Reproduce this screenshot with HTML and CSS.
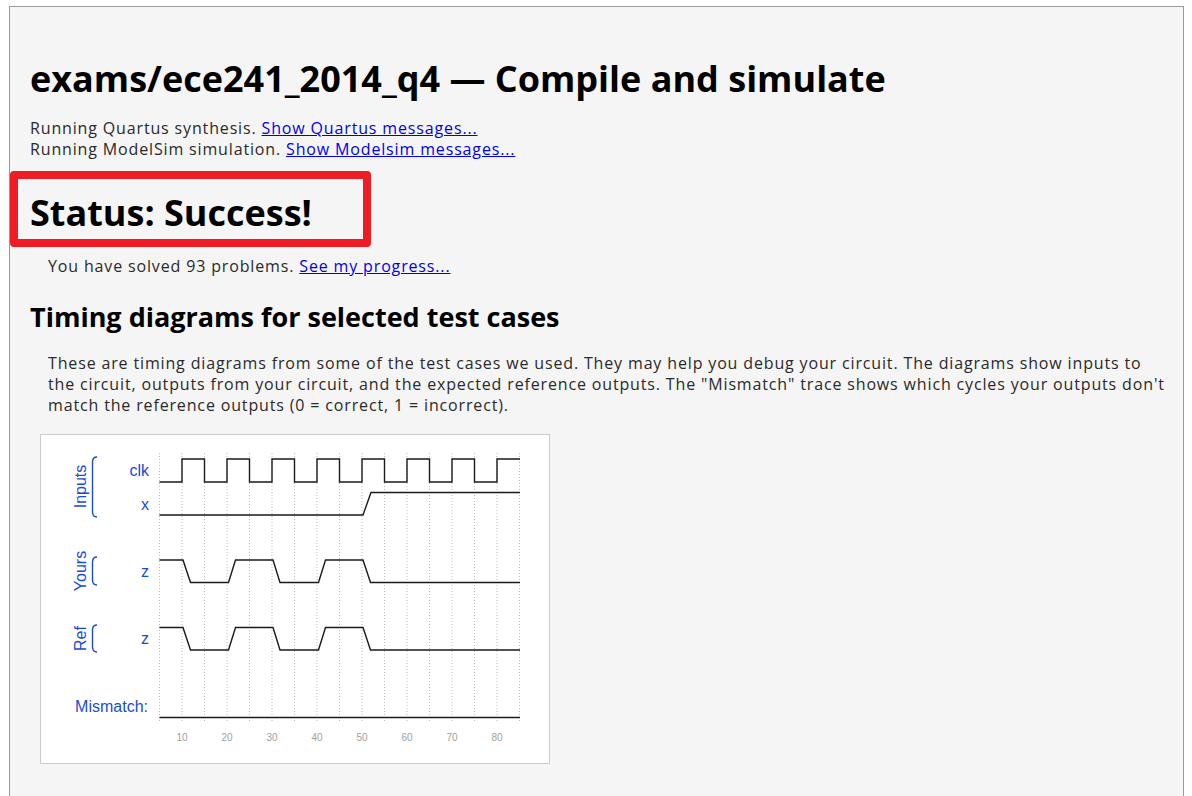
FILE: index.html
```html
<!DOCTYPE html>
<html>
<head>
<meta charset="utf-8">
<title>exams/ece241_2014_q4 — Compile and simulate</title>
<link rel="stylesheet" href="styles.css">
</head>
<body>
<div class="page">
  <h1 class="title">exams/ece241_2014_q4 — Compile and simulate</h1>
  <div class="log">
    <div>Running Quartus synthesis. <a href="#">Show Quartus messages...</a></div>
    <div>Running ModelSim simulation. <a href="#">Show Modelsim messages...</a></div>
  </div>
  <div class="status">
    <h1 class="status-text">Status: Success!</h1>
  </div>
  <p class="indent solved">You have solved 93 problems. <a href="#">See my progress...</a></p>
  <h2 class="section">Timing diagrams for selected test cases</h2>
  <p class="indent desc">These are timing diagrams from some of the test cases we used. They may help you debug your circuit. The diagrams show inputs to<br>the circuit, outputs from your circuit, and the expected reference outputs. The "Mismatch" trace shows which cycles your outputs don't<br>match the reference outputs (0 = correct, 1 = incorrect).</p>
  <div class="diagram">
    <svg class="wave" width="508" height="328" viewBox="41 435 508 328" xmlns="http://www.w3.org/2000/svg">
      <g class="grid">
        <line x1="159.5" y1="453" x2="159.5" y2="721"/>
        <line x1="182" y1="453" x2="182" y2="721"/>
        <line x1="204.5" y1="453" x2="204.5" y2="721"/>
        <line x1="227" y1="453" x2="227" y2="721"/>
        <line x1="249.5" y1="453" x2="249.5" y2="721"/>
        <line x1="272" y1="453" x2="272" y2="721"/>
        <line x1="294.5" y1="453" x2="294.5" y2="721"/>
        <line x1="317" y1="453" x2="317" y2="721"/>
        <line x1="339.5" y1="453" x2="339.5" y2="721"/>
        <line x1="362" y1="453" x2="362" y2="721"/>
        <line x1="384.5" y1="453" x2="384.5" y2="721"/>
        <line x1="407" y1="453" x2="407" y2="721"/>
        <line x1="429.5" y1="453" x2="429.5" y2="721"/>
        <line x1="452" y1="453" x2="452" y2="721"/>
        <line x1="474.5" y1="453" x2="474.5" y2="721"/>
        <line x1="497" y1="453" x2="497" y2="721"/>
        <line x1="519.5" y1="453" x2="519.5" y2="721"/>
      </g>
      <g class="sig">
        <path d="M159.5 482 H182 V459 H204.5 V482 H227 V459 H249.5 V482 H272 V459 H294.5 V482 H317 V459 H339.5 V482 H362 V459 H384.5 V482 H407 V459 H429.5 V482 H452 V459 H474.5 V482 H497 V459 H520"/>
        <path d="M159.5 515 H363 L371 492.5 H520"/>
        <path d="M159.5 560 H183 L190.5 582.5 H228.5 L235.5 560 H273 L280 582.5 H318.5 L325.5 560 H363 L370.5 582.5 H520"/>
        <path d="M159.5 627.5 H183 L190.5 650 H228.5 L235.5 627.5 H273 L280 650 H318.5 L325.5 627.5 H363 L370.5 650 H520"/>
        <path d="M159.5 717.5 H520"/>
      </g>
      <g class="brace">
        <path d="M97 457 Q92.5 457 92.5 462 V512 Q92.5 517 97 517"/>
        <path d="M97 557 Q92.5 557 92.5 562 V580 Q92.5 585 97 585"/>
        <path d="M97 625 Q92.5 625 92.5 630 V647 Q92.5 652 97 652"/>
      </g>
      <g class="label">
        <text x="149" y="476" text-anchor="end">clk</text>
        <text x="149" y="510" text-anchor="end">x</text>
        <text x="149" y="577" text-anchor="end">z</text>
        <text x="149" y="644" text-anchor="end">z</text>
        <text x="148" y="712" text-anchor="end">Mismatch:</text>
        <text transform="translate(86 486.5) rotate(-90)" text-anchor="middle">Inputs</text>
        <text transform="translate(86 571) rotate(-90)" text-anchor="middle">Yours</text>
        <text transform="translate(86 638.5) rotate(-90)" text-anchor="middle">Ref</text>
      </g>
      <g class="axis">
        <text x="182" y="740.5" text-anchor="middle">10</text>
        <text x="227" y="740.5" text-anchor="middle">20</text>
        <text x="272" y="740.5" text-anchor="middle">30</text>
        <text x="317" y="740.5" text-anchor="middle">40</text>
        <text x="362" y="740.5" text-anchor="middle">50</text>
        <text x="407" y="740.5" text-anchor="middle">60</text>
        <text x="452" y="740.5" text-anchor="middle">70</text>
        <text x="497" y="740.5" text-anchor="middle">80</text>
      </g>
    </svg>
  </div>
</div>
</body>
</html>
```

FILE: styles.css
```css
html {
  background: #ffffff;
}

body {
  margin: 0;
  font-family: "Open Sans", "Liberation Sans", sans-serif;
  font-size: 16px;
  letter-spacing: 0.85px;
  color: #2a2a2a;
}

a {
  color: #0000ee;
  text-decoration: underline;
}

.page {
  margin: 6px 8px 0 9px;
  padding: 48px 20px 60px 20px;
  border: 1px solid #999999;
  border-bottom: none;
  background: #f5f5f5;
}

.title {
  margin: 0;
  font-family: "Open Sans", sans-serif;
  font-weight: 700;
  font-size: 36px;
  line-height: 48px;
  letter-spacing: 0;
  color: #000000;
}

.log {
  margin-top: 15px;
  line-height: 21px;
}

.status {
  margin: 11px 0 0 -20px;
  width: 361px;
  box-sizing: border-box;
  padding: 14px 0 6px 12px;
  border: 8px solid #ee1c25;
  border-radius: 4px;
}

.status-text {
  margin: 0;
  font-family: "Open Sans", sans-serif;
  font-weight: 700;
  font-size: 36px;
  line-height: 40px;
  letter-spacing: 0;
  color: #000000;
}

.indent {
  margin: 0 0 0 18px;
  line-height: 21px;
}

.solved {
  margin-top: 9px;
}

.section {
  margin: 24px 0 0 0;
  font-family: "Open Sans", sans-serif;
  font-weight: 700;
  font-size: 27px;
  line-height: 32px;
  letter-spacing: 0;
  color: #000000;
}

.desc {
  margin-top: 20px;
  white-space: nowrap;
}

.diagram {
  margin: 18px 0 0 10px;
  width: 510px;
  height: 330px;
  box-sizing: border-box;
  border: 1px solid #cccccc;
  background: #ffffff;
}

.wave {
  display: block;
  letter-spacing: 0;
}

.grid line {
  stroke: #bbbbbb;
  stroke-width: 1;
  stroke-dasharray: 1 2;
}

.sig path {
  fill: none;
  stroke: #1a1a1a;
  stroke-width: 1.4;
}

.brace path {
  fill: none;
  stroke: #1a4bd6;
  stroke-width: 1.4;
}

.label text {
  font-family: "Liberation Sans", Arial, sans-serif;
  font-size: 16px;
  fill: #1a4bd6;
}

.axis text {
  font-family: "Liberation Sans", Arial, sans-serif;
  font-size: 10px;
  fill: #a0a0a0;
}
```
